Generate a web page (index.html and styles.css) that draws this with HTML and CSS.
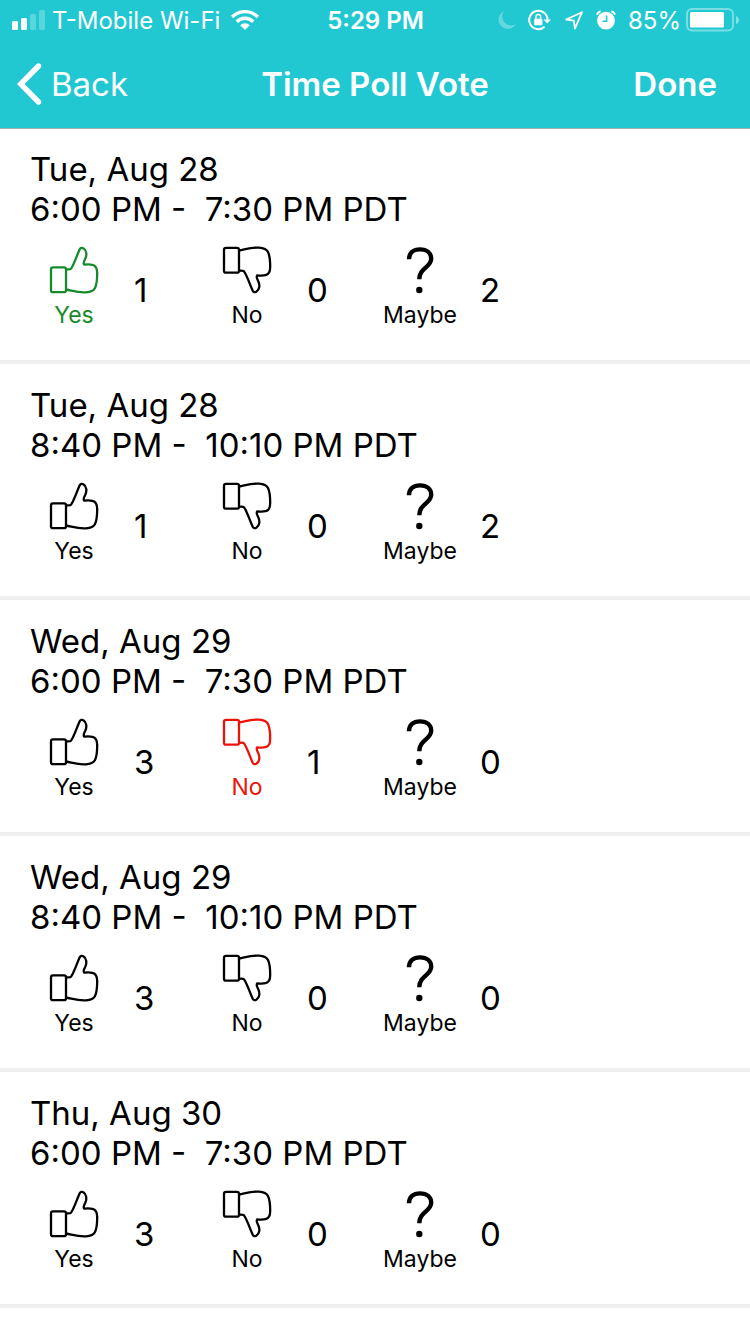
FILE: index.html
```
<!DOCTYPE html>
<html lang="en">
<head>
<meta charset="utf-8">
<meta name="viewport" content="width=device-width, initial-scale=1">
<title>Time Poll Vote</title>
<link rel="stylesheet" href="styles.css">
</head>
<body>
<svg class="defs" aria-hidden="true">
  <symbol id="thumb-up" viewBox="0 0 50 50">
    <rect x="2" y="22.3" width="15" height="24.9" rx="2"/>
    <path d="M17 24.2C19 24.6 21 24.8 22.2 23.4C25 19.500 28 10 30.700 4.200C31.500 2.700 33 2.500 34.300 3.200C37.800 5.200 38 10 36.300 13.800C35 16.500 33.800 18 35.200 19.600C37.500 19.400 41 19.200 43.500 19.800C47.500 20.600 48.200 24 48.200 28C48.200 34 48 39 46 43C44.500 46 41 47 37 47.300C29 47.900 23 45.500 17 44.500"/>
  </symbol>
  <symbol id="thumb-down" viewBox="0 0 50 50">
    <g transform="matrix(1 0 0 -1 0 50)">
      <rect x="2" y="22.3" width="15" height="24.9" rx="2"/>
      <path d="M17 24.2C19 24.6 21 24.8 22.2 23.4C25 19.500 28 10 30.700 4.200C31.500 2.700 33 2.500 34.300 3.200C37.800 5.200 38 10 36.300 13.800C35 16.500 33.800 18 35.200 19.600C37.500 19.400 41 19.200 43.500 19.800C47.500 20.600 48.200 24 48.200 28C48.200 34 48 39 46 43C44.500 46 41 47 37 47.300C29 47.900 23 45.500 17 44.500"/>
    </g>
  </symbol>
  <symbol id="question" viewBox="0 0 50 50">
    <path stroke-width="4.400" d="M14 14.300C14 8 18.500 4.400 25 4.400C31.800 4.400 36.200 8 36.200 13.800C36.200 22.500 24.300 22.500 24.300 34.300"/>
    <circle cx="24.300" cy="45" r="3.200" fill="currentColor" stroke="none"/>
  </symbol>
</svg>

<header class="header">
  <div class="status">
    <div class="status-left">
      <svg width="33" height="20" viewBox="0 0 33 20" fill="#fff" aria-hidden="true">
        <rect x="0" y="11" width="6" height="9" rx="1.500"/>
        <rect x="9" y="8" width="6" height="12" rx="1.500"/>
        <rect x="18" y="4" width="6" height="16" rx="1.500" opacity=".25"/>
        <rect x="27" y="0" width="6" height="20" rx="1.500" opacity=".25"/>
      </svg>
      <span class="carrier">T-Mobile Wi-Fi</span>
      <svg width="28" height="20" viewBox="0 0 28 20" fill="none" stroke="#fff" stroke-width="3.400" aria-hidden="true">
        <path d="M1.200 7A18 18 0 0 1 26.800 7"/>
        <path d="M5.800 11.700A11.600 11.600 0 0 1 22.200 11.700"/>
        <path d="M14 20L9.200 15.200A6.800 6.800 0 0 1 18.800 15.200Z" fill="#fff" stroke="none"/>
      </svg>
    </div>
    <time class="clock">5:29 PM</time>
    <div class="status-right">
      <svg width="18" height="20" viewBox="0 0 18 20" fill="#fff" opacity=".3" aria-hidden="true">
        <path d="M6 1A9.300 9.300 0 1 0 18 14A9 9 0 0 1 6 1Z"/>
      </svg>
      <svg width="24" height="22" viewBox="0 0 24 22" fill="none" stroke="#fff" stroke-width="2" aria-hidden="true">
        <path d="M19.600 11A9.200 9.200 0 1 0 16.600 17.800"/>
        <path d="M15.500 10.500H23L19.300 14.500Z" fill="#fff" stroke="none"/>
        <rect x="6.200" y="9.800" width="8.200" height="6.400" rx="1" fill="#fff" stroke="none"/>
        <path d="M8 10V7.800A2.300 2.300 0 0 1 12.600 7.800V10" stroke-width="1.500"/>
      </svg>
      <svg width="20" height="20" viewBox="0 0 20 20" fill="none" stroke="#fff" stroke-width="1.800" stroke-linejoin="round" aria-hidden="true">
        <path d="M18 2.200L2.200 9.500L9.800 10.600L11 18.500Z"/>
      </svg>
      <svg width="20" height="20" viewBox="0 0 20 20" fill="none" stroke="#fff" aria-hidden="true">
        <circle cx="10" cy="10.600" r="8.900" fill="#fff" stroke="none"/>
        <path d="M.8 4.600Q2 2 4.600 1.200M15.400 1.200Q18 2 19.200 4.600" stroke-width="2"/>
        <path d="M10.600 5.500V11.200H6.500" stroke="#21c8d2" stroke-width="1.600"/>
      </svg>
      <span class="percent">85%</span>
      <svg width="53" height="24" viewBox="0 0 53 24" aria-hidden="true">
        <rect x="1" y="1" width="46" height="21.500" rx="5" fill="none" stroke="#fff" stroke-width="2" opacity=".4"/>
        <rect x="4" y="4" width="34" height="15.500" rx="1.500" fill="#fff"/>
        <path d="M50 8Q53 9 53 12Q53 15 50 16Z" fill="#fff" opacity=".45"/>
      </svg>
    </div>
  </div>
  <nav class="nav">
    <button class="back" type="button">
      <svg width="26" height="44" viewBox="0 0 26 44" fill="none" stroke="#fff" stroke-width="5.400" stroke-linecap="round" stroke-linejoin="miter" aria-hidden="true"><path d="M21.500 4L3.700 22L21.500 40"/></svg>
      <span>Back</span>
    </button>
    <h1 class="title">Time Poll Vote</h1>
    <button class="done" type="button">Done</button>
  </nav>
</header>

<main class="polls">
  <section class="poll">
    <h2 class="when">Tue, Aug 28<br>6:00 PM -&nbsp; 7:30 PM PDT</h2>
    <div class="options">
      <div class="option"><button class="vote yes" type="button"><svg class="icon"><use href="#thumb-up"/></svg>Yes</button><span class="count">1</span></div>
      <div class="option"><button class="vote" type="button"><svg class="icon"><use href="#thumb-down"/></svg>No</button><span class="count">0</span></div>
      <div class="option"><button class="vote" type="button"><svg class="icon"><use href="#question"/></svg>Maybe</button><span class="count">2</span></div>
    </div>
  </section>
  <section class="poll">
    <h2 class="when">Tue, Aug 28<br>8:40 PM -&nbsp; 10:10 PM PDT</h2>
    <div class="options">
      <div class="option"><button class="vote" type="button"><svg class="icon"><use href="#thumb-up"/></svg>Yes</button><span class="count">1</span></div>
      <div class="option"><button class="vote" type="button"><svg class="icon"><use href="#thumb-down"/></svg>No</button><span class="count">0</span></div>
      <div class="option"><button class="vote" type="button"><svg class="icon"><use href="#question"/></svg>Maybe</button><span class="count">2</span></div>
    </div>
  </section>
  <section class="poll">
    <h2 class="when">Wed, Aug 29<br>6:00 PM -&nbsp; 7:30 PM PDT</h2>
    <div class="options">
      <div class="option"><button class="vote" type="button"><svg class="icon"><use href="#thumb-up"/></svg>Yes</button><span class="count">3</span></div>
      <div class="option"><button class="vote no" type="button"><svg class="icon"><use href="#thumb-down"/></svg>No</button><span class="count">1</span></div>
      <div class="option"><button class="vote" type="button"><svg class="icon"><use href="#question"/></svg>Maybe</button><span class="count">0</span></div>
    </div>
  </section>
  <section class="poll">
    <h2 class="when">Wed, Aug 29<br>8:40 PM -&nbsp; 10:10 PM PDT</h2>
    <div class="options">
      <div class="option"><button class="vote" type="button"><svg class="icon"><use href="#thumb-up"/></svg>Yes</button><span class="count">3</span></div>
      <div class="option"><button class="vote" type="button"><svg class="icon"><use href="#thumb-down"/></svg>No</button><span class="count">0</span></div>
      <div class="option"><button class="vote" type="button"><svg class="icon"><use href="#question"/></svg>Maybe</button><span class="count">0</span></div>
    </div>
  </section>
  <section class="poll">
    <h2 class="when">Thu, Aug 30<br>6:00 PM -&nbsp; 7:30 PM PDT</h2>
    <div class="options">
      <div class="option"><button class="vote" type="button"><svg class="icon"><use href="#thumb-up"/></svg>Yes</button><span class="count">3</span></div>
      <div class="option"><button class="vote" type="button"><svg class="icon"><use href="#thumb-down"/></svg>No</button><span class="count">0</span></div>
      <div class="option"><button class="vote" type="button"><svg class="icon"><use href="#question"/></svg>Maybe</button><span class="count">0</span></div>
    </div>
  </section>
</main>
</body>
</html>
```
FILE: styles.css
```
* {
  box-sizing: border-box;
}

body {
  margin: 0;
  background: #fff;
  color: #000;
  font-family: Inter, "Liberation Sans", sans-serif;
}

button {
  margin: 0;
  padding: 0;
  border: 0;
  background: none;
  color: inherit;
  font: inherit;
  cursor: pointer;
}

svg {
  display: block;
  flex: none;
}

.defs {
  position: absolute;
  width: 0;
  height: 0;
}

.header {
  background: #21c8d2;
  color: #fff;
  box-shadow: 0 1px 0 #a7b0b1;
}

.status,
.nav {
  display: grid;
  grid-template-columns: 1fr auto 1fr;
  align-items: center;
}

.status {
  height: 40px;
  padding: 0 11px 0 12px;
  font-size: 24px;
  line-height: 38px;
}

.status-left,
.status-right {
  display: flex;
  align-items: center;
}

.status-left {
  gap: 7px;
}

.status-right {
  justify-content: flex-end;
  gap: 12px;
}

.carrier,
.clock,
.percent {
  padding-top: 2px;
}

.carrier {
  margin-right: 4px;
}

.percent {
  margin-right: -7px;
}

.clock {
  font-weight: 600;
}

.nav {
  height: 88px;
  padding: 0 17px;
  font-size: 33px;
  line-height: 40px;
}

.back {
  display: flex;
  align-items: center;
  gap: 8px;
  justify-self: start;
}

.title {
  margin: 0;
  font-size: inherit;
  font-weight: 600;
}

.done {
  justify-self: end;
  margin-right: 16px;
  font-weight: 600;
}

.poll {
  padding: 21px 29px 31px;
  border-bottom: 4px solid #efefef;
}

.when {
  margin: 0 0 16px;
  padding-left: 1px;
  font-size: 33px;
  font-weight: 400;
  line-height: 40px;
}

.options {
  display: flex;
}

.option {
  display: flex;
  align-items: center;
  gap: 15px;
  width: 173px;
}

.vote {
  display: flex;
  flex-direction: column;
  align-items: center;
  gap: 6px;
  width: 90px;
  font-size: 23px;
  line-height: 28px;
}

.icon {
  width: 50px;
  height: 50px;
  fill: none;
  stroke: currentColor;
  stroke-width: 2.3;
}

.yes {
  color: #178a2b;
}

.no {
  color: #ee1308;
}

.count {
  padding-top: 6px;
  font-size: 33px;
  line-height: 40px;
}
```
